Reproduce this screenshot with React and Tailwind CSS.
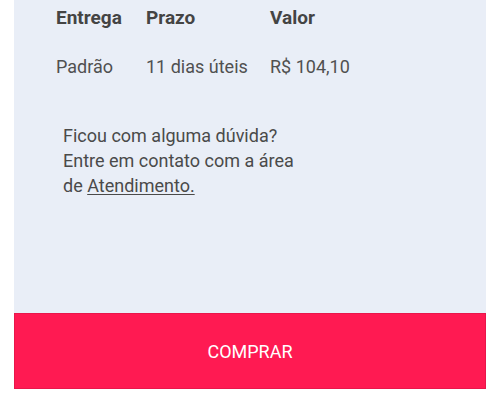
export default function App() {
  return (
    <div className="w-[500px] h-[415px] bg-white font-['Roboto',sans-serif] overflow-hidden">
      <div className="mx-[14px] w-[472px]">
        <div className="bg-[#e9eef7] h-[313px] pt-[6px]">
          <div className="pl-[42px] text-[18px] leading-[24px]">
            <div className="flex font-bold text-[19px] text-[#444444]">
              <span className="w-[90px]">Entrega</span>
              <span className="w-[124px]">Prazo</span>
              <span>Valor</span>
            </div>
            <div className="flex text-[#505050] mt-[25px]">
              <span className="w-[90px]">Padrão</span>
              <span className="w-[124px]">11 dias úteis</span>
              <span>R$ 104,10</span>
            </div>
          </div>
          <p className="pl-[49px] mt-[44px] text-[18px] leading-[25px] text-[#4a4a4a]">
            Ficou com alguma dúvida?
            <br />
            Entre em contato com a área
            <br />
            de <a href="#" className="underline underline-offset-2">Atendimento.</a>
          </p>
        </div>
        <button className="w-full h-[76px] bg-[#ff1a52] border border-[#e8174b] text-white text-[18px] flex items-center justify-center">
          COMPRAR
        </button>
      </div>
    </div>
  );
}
